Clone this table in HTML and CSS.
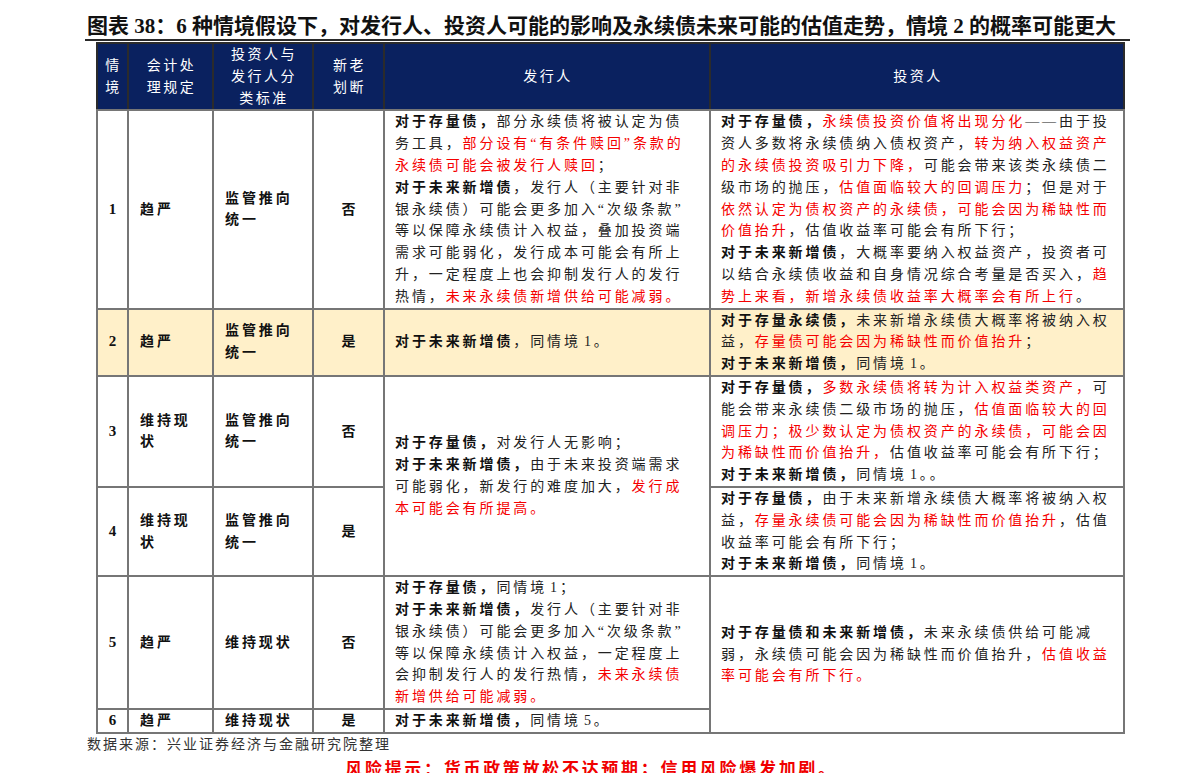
FILE: index.html
```html
<!DOCTYPE html>
<html lang="zh-CN">
<head>
<meta charset="utf-8">
<title>图表 38</title>
<link rel="stylesheet" href="styles.css">
</head>
<body>
<div class="page">
  <h1 class="title">图表 38：6 种情境假设下，对发行人、投资人可能的影响及永续债未来可能的估值走势，情境 2 的概率可能更大</h1>
  <table class="grid">
    <colgroup>
      <col class="c-no"><col class="c-acc"><col class="c-cls"><col class="c-new"><col class="c-iss"><col class="c-inv">
    </colgroup>
    <thead>
      <tr>
        <th>情<br>境</th>
        <th>会计处<br>理规定</th>
        <th>投资人与<br>发行人分<br>类标准</th>
        <th>新老<br>划断</th>
        <th>发行人</th>
        <th>投资人</th>
      </tr>
    </thead>
    <tbody>
      <tr>
        <td class="num">1</td>
        <td class="lbl">趋严</td>
        <td class="lbl">监管推向统一</td>
        <td class="yn">否</td>
        <td class="txt"><b class="key">对于存量债，</b>部分永续债将被认定为债<br>务工具，<span class="warn">部分设有“有条件赎回”条款的</span><br><span class="warn">永续债可能会被发行人赎回</span>；<br><b class="key">对于未来新增债</b>，发行人（主要针对非<br>银永续债）可能会更多加入“次级条款”<br>等以保障永续债计入权益，叠加投资端<br>需求可能弱化，发行成本可能会有所上<br>升，一定程度上也会抑制发行人的发行<br>热情，<span class="warn">未来永续债新增供给可能减弱。</span></td>
        <td class="txt"><b class="key">对于存量债，</b><span class="warn">永续债投资价值将出现分化</span>——由于投<br>资人多数将永续债纳入债权资产，<span class="warn">转为纳入权益资产</span><br><span class="warn">的永续债投资吸引力下降，</span>可能会带来该类永续债二<br>级市场的抛压，<span class="warn">估值面临较大的回调压力</span>；但是对于<br><span class="warn">依然认定为债权资产的永续债，可能会因为稀缺性而</span><br><span class="warn">价值抬升</span>，估值收益率可能会有所下行；<br><b class="key">对于未来新增债</b>，大概率要纳入权益资产，投资者可<br>以结合永续债收益和自身情况综合考量是否买入，<span class="warn">趋</span><br><span class="warn">势上来看，新增永续债收益率大概率会有所上行</span>。</td>
      </tr>
      <tr class="hl">
        <td class="num">2</td>
        <td class="lbl">趋严</td>
        <td class="lbl">监管推向统一</td>
        <td class="yn">是</td>
        <td class="txt"><b class="key">对于未来新增债</b>，同情境<span class="d">1</span>。</td>
        <td class="txt"><b class="key">对于存量永续债，</b>未来新增永续债大概率将被纳入权<br>益，<span class="warn">存量债可能会因为稀缺性而价值抬升</span>；<br><b class="key">对于未来新增债，</b>同情境<span class="d">1</span>。</td>
      </tr>
      <tr>
        <td class="num">3</td>
        <td class="lbl">维持现状</td>
        <td class="lbl">监管推向统一</td>
        <td class="yn">否</td>
        <td class="txt" rowspan="2"><b class="key">对于存量债，</b>对发行人无影响；<br><b class="key">对于未来新增债，</b>由于未来投资端需求<br>可能弱化，新发行的难度加大，<span class="warn">发行成</span><br><span class="warn">本可能会有所提高。</span></td>
        <td class="txt"><b class="key">对于存量债，</b><span class="warn">多数永续债将转为计入权益类资产，</span>可<br>能会带来永续债二级市场的抛压，<span class="warn">估值面临较大的回</span><br><span class="warn">调压力；极少数认定为债权资产的永续债，可能会因</span><br><span class="warn">为稀缺性而价值抬升，</span>估值收益率可能会有所下行；<br><b class="key">对于未来新增债，</b>同情境<span class="d">1</span>。。</td>
      </tr>
      <tr>
        <td class="num">4</td>
        <td class="lbl">维持现状</td>
        <td class="lbl">监管推向统一</td>
        <td class="yn">是</td>
        <td class="txt"><b class="key">对于存量债，</b>由于未来新增永续债大概率将被纳入权<br>益，<span class="warn">存量永续债可能会因为稀缺性而价值抬升</span>，估值<br>收益率可能会有所下行；<br><b class="key">对于未来新增债，</b>同情境<span class="d">1</span>。</td>
      </tr>
      <tr>
        <td class="num">5</td>
        <td class="lbl">趋严</td>
        <td class="lbl">维持现状</td>
        <td class="yn">否</td>
        <td class="txt"><b class="key">对于存量债，</b>同情境<span class="d">1</span>；<br><b class="key">对于未来新增债，</b>发行人（主要针对非<br>银永续债）可能会更多加入“次级条款”<br>等以保障永续债计入权益，一定程度上<br>会抑制发行人的发行热情，<span class="warn">未来永续债</span><br><span class="warn">新增供给可能减弱。</span></td>
        <td class="txt" rowspan="2"><b class="key">对于存量债和未来新增债，</b>未来永续债供给可能减<br>弱，永续债可能会因为稀缺性而价值抬升，<span class="warn">估值收益</span><br><span class="warn">率可能会有所下行。</span></td>
      </tr>
      <tr>
        <td class="num">6</td>
        <td class="lbl">趋严</td>
        <td class="lbl">维持现状</td>
        <td class="yn">是</td>
        <td class="txt"><b class="key">对于未来新增债，</b>同情境<span class="d">5</span>。</td>
      </tr>
    </tbody>
  </table>
  <p class="source">数据来源：兴业证券经济与金融研究院整理</p>
</div>
<p class="risk">风险提示：货币政策放松不达预期；信用风险爆发加剧。</p>
</body>
</html>
```

FILE: styles.css
```css
html, body {
  margin: 0;
  padding: 0;
  background: #ffffff;
}

body {
  font-family: "Liberation Serif", "Noto Sans CJK SC", serif;
  color: #222222;
  overflow: hidden;
  height: 773px;
}

.page {
  padding-left: 85px;
  width: 1045px;
}

.title {
  margin: 0;
  padding-top: 13px;
  height: 26px;
  line-height: 26px;
  font-size: 21px;
  font-weight: bold;
  color: #111111;
  white-space: nowrap;
  letter-spacing: 0;
  padding-left: 2px;
  border-bottom: 2px solid #2a2a2a;
}

.grid {
  margin: 1px 0 0 11px;
  width: 1027px;
  border-collapse: collapse;
  table-layout: fixed;
  font-size: 14px;
  line-height: 21.8px;
  letter-spacing: 2.9px;
}

.c-no { width: 31px; }
.c-acc { width: 85px; }
.c-cls { width: 100px; }
.c-new { width: 71px; }
.c-iss { width: 326px; }
.c-inv { width: 414px; }

.grid th,
.grid td {
  border: 2px solid #767676;
  padding: 0;
  vertical-align: middle;
}

.grid thead th {
  background: #0a215f;
  color: #ffffff;
  font-weight: normal;
  text-align: center;
  letter-spacing: 2.5px;
  padding-left: 2px;
  height: 63px;
  border-color: #2b2b2b;
  border-bottom-color: #767676;
}

.hl td {
  background: #fff0c9;
}

.num {
  text-align: center;
  font-weight: bold;
  font-size: 15px;
  letter-spacing: 0;
  color: #111111;
}

.lbl {
  font-weight: bold;
  color: #111111;
  padding: 0 10px 0 11px !important;
}

.yn {
  text-align: center;
  font-weight: bold;
  color: #111111;
  letter-spacing: 0;
}

.txt {
  white-space: nowrap;
  padding-left: 10px !important;
  color: #222222;
}

.d {
  margin-left: 3px;
}

.key {
  font-weight: bold;
  color: #111111;
}

.warn {
  color: #f50000;
}

.source {
  margin: 0;
  padding-left: 2px;
  font-size: 14px;
  line-height: 22px;
  letter-spacing: 2px;
  color: #333333;
  white-space: nowrap;
}

.risk {
  margin: 2px 0 0 0;
  text-align: center;
  font-size: 17px;
  line-height: 24px;
  font-weight: bold;
  letter-spacing: 2.7px;
  color: #f00000;
  padding-right: 8px;
}
```
